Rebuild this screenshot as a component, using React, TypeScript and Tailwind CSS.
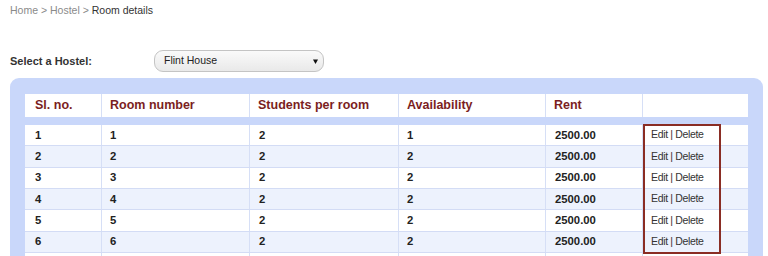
const rows = [
  { sl: '1', room: '1', students: '2', avail: '1', rent: '2500.00' },
  { sl: '2', room: '2', students: '2', avail: '2', rent: '2500.00' },
  { sl: '3', room: '3', students: '2', avail: '2', rent: '2500.00' },
  { sl: '4', room: '4', students: '2', avail: '2', rent: '2500.00' },
  { sl: '5', room: '5', students: '2', avail: '2', rent: '2500.00' },
  { sl: '6', room: '6', students: '2', avail: '2', rent: '2500.00' },
];

const cols = 'grid grid-cols-[77px_148px_149px_147px_97px_103px]';

const App = () => {
  return (
    <div className="w-[768px] h-[256px] overflow-hidden bg-white font-['Liberation_Sans',Arial,sans-serif]">
      {/* breadcrumb */}
      <div className="pl-[10px] pt-[4px] text-[10.5px] leading-[13px] text-[#8a8a8a]">
        Home &gt; Hostel &gt; <span className="text-[#333]">Room details</span>
      </div>

      {/* hostel picker */}
      <div className="flex items-center h-[22px] mt-[33px] pl-[10px]">
        <div className="w-[144px] text-[11px] font-bold text-[#333]">Select a Hostel:</div>
        <div className="flex items-center justify-between w-[170px] h-[22px] pl-[9px] pr-[5px] rounded-[9px] border border-[#c4c4c4] bg-gradient-to-b from-[#fafafa] to-[#e9e9e9] text-[10.5px] text-[#222]">
          <span>Flint House</span>
          <svg width="5" height="5" viewBox="0 0 5 5">
            <path d="M0 0.5 L5 0.5 L2.5 5 Z" fill="#111" />
          </svg>
        </div>
      </div>

      {/* table panel */}
      <div className="mt-[6px] ml-[10px] w-[753px] rounded-t-[9px] bg-[#c9d7fa] px-[15px] pt-[16px] pb-[16px]">
        <div className="relative">
          <div className={`${cols} h-[23px] bg-white text-[12.5px] font-bold text-[#7b1e1e]`}>
            {['Sl. no.', 'Room number', 'Students per room', 'Availability', 'Rent', ''].map((h, i) => (
              <div key={i} className={`flex items-center ${i === 0 ? 'pl-[10px]' : 'pl-[8px]'} ${i < 5 ? 'border-r border-[#d6dff6]' : ''}`}>
                {h}
              </div>
            ))}
          </div>

          <div className="mt-[8px]">
            {rows.map((r, idx) => (
              <div
                key={r.sl}
                className={`${cols} h-[21.33px] border-b border-[#d3dcf5] text-[11.3px] font-bold text-[#222] ${idx % 2 === 0 ? 'bg-white' : 'bg-[#edf2fd]'}`}
              >
                <div className="flex items-center pl-[10px] border-r border-[#d6dff6]">{r.sl}</div>
                <div className="flex items-center pl-[8px] border-r border-[#d6dff6]">{r.room}</div>
                <div className="flex items-center pl-[9px] border-r border-[#d6dff6]">{r.students}</div>
                <div className="flex items-center pl-[8px] border-r border-[#d6dff6]">{r.avail}</div>
                <div className="flex items-center pl-[9px] border-r border-[#d6dff6]">{r.rent}</div>
                <div className="flex items-center pl-[8px] text-[10.5px] font-normal tracking-[-0.35px] text-[#333]">
                  <a>Edit</a>&nbsp;|&nbsp;<a>Delete</a>
                </div>
              </div>
            ))}
            {/* next row, scrolled below the fold */}
            <div className={`${cols} h-[21.33px] bg-white`}>
              {[0, 1, 2, 3, 4, 5].map((i) => (
                <div key={i} className={i < 5 ? 'border-r border-[#d6dff6]' : ''} />
              ))}
            </div>
          </div>

          {/* highlight around actions */}
          <div className="absolute left-[618px] top-[30px] w-[78px] h-[130px] border-2 border-[#8a2d24]" />
        </div>
      </div>
    </div>
  );
};

export default App;
